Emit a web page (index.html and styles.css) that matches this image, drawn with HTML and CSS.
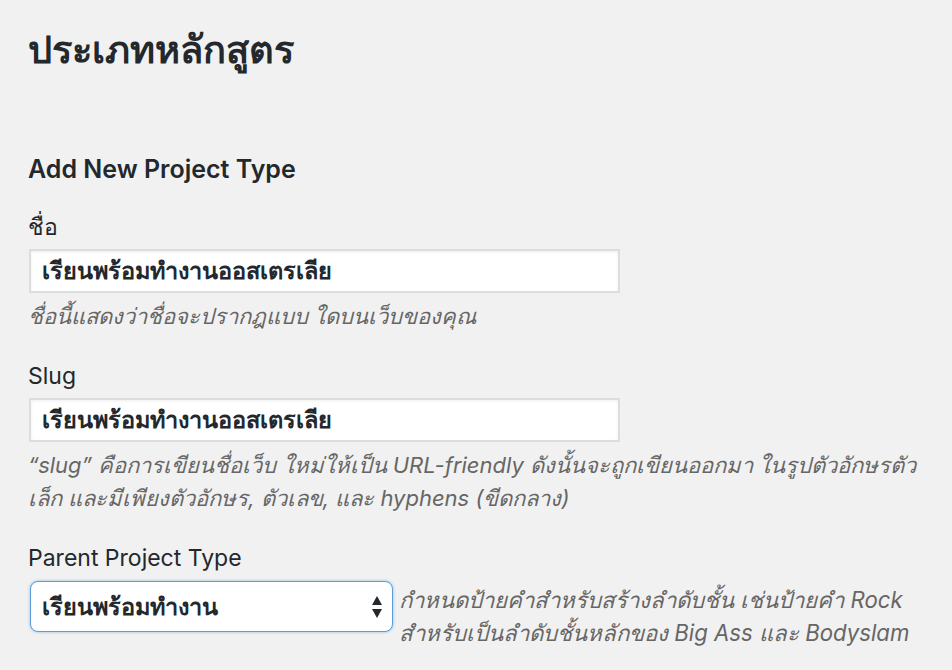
FILE: index.html
```html
<!DOCTYPE html>
<html lang="th">
<head>
<meta charset="utf-8">
<link rel="stylesheet" href="styles.css">
</head>
<body>
<div class="wrap">
  <h1 class="title">ประเภทหลักสูตร</h1>
  <h2 class="subtitle">Add New Project Type</h2>
  <div class="field first">
    <label class="label">ชื่อ</label>
    <div class="input">เรียนพร้อมทำงานออสเตรเลีย</div>
    <p class="desc">ชื่อนี้แสดงว่าชื่อจะปรากฎแบบ ใดบนเว็บของคุณ</p>
  </div>
  <div class="field">
    <label class="label">Slug</label>
    <div class="input">เรียนพร้อมทำงานออสเตรเลีย</div>
    <p class="desc">“slug” คือการเขียนชื่อเว็บ ใหม่ให้เป็น URL-friendly ดังนั้นจะถูกเขียนออกมา ในรูปตัวอักษรตัว<br>เล็ก และมีเพียงตัวอักษร, ตัวเลข, และ hyphens (ขีดกลาง)</p>
  </div>
  <div class="field">
    <label class="label">Parent Project Type</label>
    <div class="select-row">
      <div class="select">
        <span>เรียนพร้อมทำงาน</span>
        <svg class="arrows" width="12" height="26" viewBox="0 0 12 26"><path d="M6 2 L11 11 H1 Z" fill="#23282d"/><path d="M6 24 L11 15 H1 Z" fill="#23282d"/></svg>
      </div>
      <p class="desc side">กำหนดป้ายคำสำหรับสร้างลำดับชั้น เช่นป้ายคำ Rock<br>สำหรับเป็นลำดับชั้นหลักของ Big Ass และ Bodyslam</p>
    </div>
  </div>
</div>
</body>
</html>
```
FILE: styles.css
```css
html, body {
  margin: 0;
  padding: 0;
  background: #f1f1f1;
}
body {
  font-family: Inter, "Noto Sans", "DejaVu Sans", sans-serif;
  color: #23282d;
  width: 952px;
  height: 670px;
  overflow: hidden;
}
.wrap {
  padding: 0 0 0 28px;
}
.title {
  margin: 0;
  padding-top: 24px;
  font-size: 38px;
  font-weight: 600;
  line-height: 50px;
}
.subtitle {
  margin: 0;
  padding-top: 78px;
  font-size: 25px;
  font-weight: 600;
  line-height: 34px;
}
.field {
  margin-top: 28px;
}
.field.first {
  margin-top: 26px;
}
.label {
  display: block;
  font-size: 23px;
  line-height: 30px;
}
.input {
  box-sizing: border-box;
  width: 591px;
  height: 44px;
  margin: 7px 0 0 1px;
  border: 2px solid #dddddd;
  background: #fff;
  box-shadow: inset 0 1px 3px rgba(0,0,0,0.07);
  font-size: 23.5px;
  font-weight: 600;
  line-height: 40px;
  padding: 0 11px;
}
.desc {
  margin: 7px 0 0;
  color: #666;
  font-style: italic;
  font-size: 22px;
  line-height: 33px;
}
.side {
  margin-left: 6px;
  margin-top: 10px;
  font-size: 22.2px;
}
.select-row {
  display: flex;
  align-items: flex-start;
}
.select {
  box-sizing: border-box;
  flex: none;
  width: 363px;
  height: 51px;
  margin: 8px 0 0 2px;
  border: 1.5px solid #5b9dd9;
  border-radius: 8px;
  background: #fff;
  box-shadow: 0 0 3px rgba(30,140,190,0.5);
  display: flex;
  align-items: center;
  justify-content: space-between;
  padding: 0 9px 0 11px;
  font-size: 23.5px;
  font-weight: 600;
}
```
